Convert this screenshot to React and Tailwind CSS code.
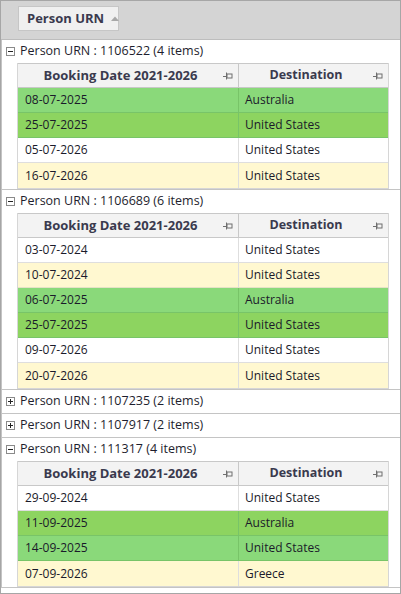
import React from "react";

const groups = [
  {
    urn: "1106522",
    open: true,
    rows: [
      ["08-07-2025", "Australia", true],
      ["25-07-2025", "United States", true],
      ["05-07-2026", "United States", false],
      ["16-07-2026", "United States", false],
    ],
  },
  {
    urn: "1106689",
    open: true,
    rows: [
      ["03-07-2024", "United States", false],
      ["10-07-2024", "United States", false],
      ["06-07-2025", "Australia", true],
      ["25-07-2025", "United States", true],
      ["09-07-2026", "United States", false],
      ["20-07-2026", "United States", false],
    ],
  },
  { urn: "1107235", open: false, count: 2, rows: [] },
  { urn: "1107917", open: false, count: 2, rows: [] },
  {
    urn: "111317",
    open: true,
    rows: [
      ["29-09-2024", "United States", false],
      ["11-09-2025", "Australia", true],
      ["14-09-2025", "United States", true],
      ["07-09-2026", "Greece", false],
    ],
  },
];

function PinIcon() {
  return (
    <svg width="10" height="8" viewBox="0 0 10 8" className="shrink-0">
      <path d="M0 4.5H3.5" stroke="#6f6f6f" strokeWidth="1" />
      <path d="M3.5 0.5V7.5" stroke="#6f6f6f" strokeWidth="1" />
      <rect x="4" y="2" width="5" height="4" fill="none" stroke="#6f6f6f" strokeWidth="1" />
    </svg>
  );
}

function ExpandBox({ open }) {
  return (
    <div className="w-[9px] h-[9px] border border-[#8a8a8a] bg-white relative shrink-0">
      <div className="absolute left-[1px] right-[1px] top-[3px] h-px bg-[#222]" />
      {!open && <div className="absolute top-[1px] bottom-[1px] left-[3px] w-px bg-[#222]" />}
    </div>
  );
}

function rowBg(i, hl) {
  const odd = i % 2 === 0;
  if (hl) return odd ? "bg-[#8ad97a] border-[#78c468]" : "bg-[#8dd460] border-[#78c468]";
  return odd ? "bg-white border-[#dedede]" : "bg-[#fff8d0] border-[#e6e2c6]";
}

function Group({ g }) {
  const count = g.open ? g.rows.length : g.count;
  return (
    <div className="border-b border-[#c4c4c4]">
      <div className="h-[23px] flex items-center pl-[4px] gap-[5px]">
        <ExpandBox open={g.open} />
        <span className="text-[12.5px] text-[#1e1e2e] leading-none whitespace-nowrap">
          Person URN : {g.urn} ({count} items)
        </span>
      </div>
      {g.open && (
        <div className="ml-[15px] w-[372px] border-x border-b border-[#d6d6d6]">
          <div className="h-[25px] flex bg-[#f3f3f3] border-t border-b border-[#c8c8c8]">
            <div className="w-[221px] flex items-center pr-[5px] border-r border-[#c8c8c8]">
              <span className="flex-1 text-center font-bold text-[13px] text-[#3a3a4e] whitespace-nowrap">
                Booking Date 2021-2026
              </span>
              <PinIcon />
            </div>
            <div className="flex-1 flex items-center pr-[5px]">
              <span className="flex-1 text-center font-bold text-[12.5px] text-[#3a3a4e]">Destination</span>
              <PinIcon />
            </div>
          </div>
          {g.rows.map((r, i) => (
            <div key={i} className={`h-[25px] flex border-b last:border-b-0 ${rowBg(i, r[2])}`}>
              <div
                className={`w-[221px] flex items-center pl-[7px] border-r ${
                  r[2] ? "border-[#78c468]" : "border-[#dedede]"
                }`}
              >
                <span className="text-[12px] text-[#1a1a2a]">{r[0]}</span>
              </div>
              <div className="flex-1 flex items-center pl-[6px]">
                <span className="text-[12px] text-[#1a1a2a]">{r[1]}</span>
              </div>
            </div>
          ))}
        </div>
      )}
    </div>
  );
}

export default function App() {
  return (
    <div
      className="w-[401px] h-[594px] border border-[#a6a6a6] bg-white overflow-hidden"
      style={{ fontFamily: '"Open Sans", "Noto Sans", sans-serif' }}
    >
      <div className="h-[39px] bg-[#d4d4d4] border-b border-[#bdbdbd] flex items-start pl-[17px] pt-[5px]">
        <div className="h-[25px] w-[101px] bg-[#f0f0f0] border border-[#c6c6c6] flex items-center pl-[8px] gap-[7px]">
          <span className="font-bold text-[13px] text-[#3a3a4e] whitespace-nowrap">Person URN</span>
          <svg width="8" height="5" viewBox="0 0 8 5" className="shrink-0">
            <path d="M0 5L4 0.5L8 5Z" fill="#a8a8a8" />
          </svg>
        </div>
      </div>
      <div className="border-l border-[#c4c4c4]">
        {groups.map((g) => (
          <Group key={g.urn} g={g} />
        ))}
      </div>
    </div>
  );
}
